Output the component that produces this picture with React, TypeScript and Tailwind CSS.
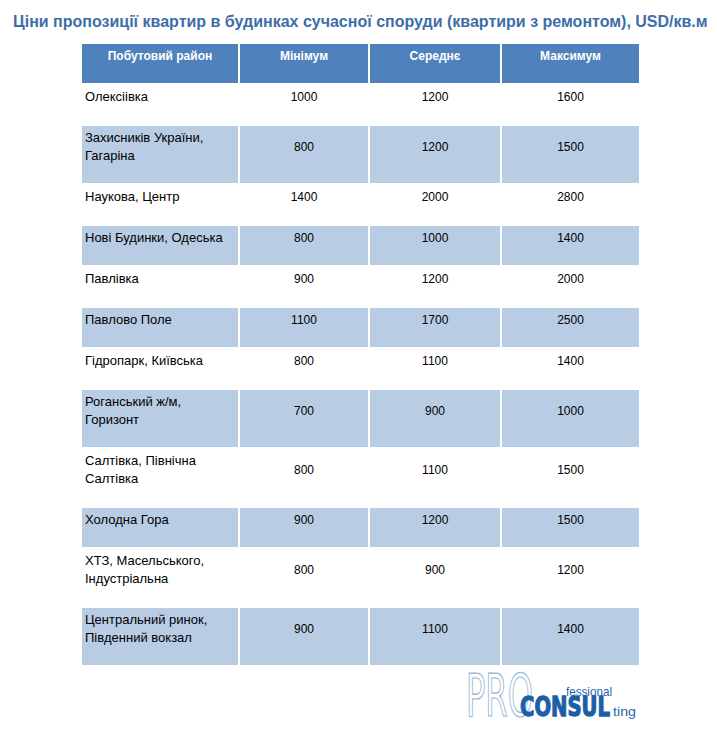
const rows: [string, string, string, string, boolean][] = [
  ['Олексіівка', '1000', '1200', '1600', false],
  ['Захисників України, Гагаріна', '800', '1200', '1500', true],
  ['Наукова, Центр', '1400', '2000', '2800', false],
  ['Нові Будинки, Одеська', '800', '1000', '1400', true],
  ['Павлівка', '900', '1200', '2000', false],
  ['Павлово Поле', '1100', '1700', '2500', true],
  ['Гідропарк, Київська', '800', '1100', '1400', false],
  ['Роганський ж/м, Горизонт', '700', '900', '1000', true],
  ['Салтівка, Північна Салтівка', '800', '1100', '1500', false],
  ['Холодна Гора', '900', '1200', '1500', true],
  ['ХТЗ, Масельського, Індустріальна', '800', '900', '1200', false],
  ['Центральний ринок, Південний вокзал', '900', '1100', '1400', true],
];

function Logo() {
  return (
    <svg width="180" height="56" viewBox="0 0 180 56" className="block overflow-visible">
      <g transform="translate(0,48) scale(1,1.75)">
        <text
          x="3"
          y="0"
          fontFamily="'DejaVu Sans Condensed', 'Liberation Sans', sans-serif"
          fontSize="34"
          fill="none"
          stroke="#8fb4d4"
          strokeWidth="0.7"
          textLength="67"
          lengthAdjust="spacingAndGlyphs"
        >
          PRO
        </text>
      </g>
      <text
        x="103"
        y="28"
        fontFamily="'Liberation Sans', Arial, sans-serif"
        fontSize="13"
        fill="#2a66ad"
        textLength="46"
        lengthAdjust="spacingAndGlyphs"
      >
        fessional
      </text>
      <text
        x="57"
        y="48"
        fontFamily="'DejaVu Sans', 'Liberation Sans', sans-serif"
        fontWeight="900"
        fontSize="27"
        fill="#1d5ea8"
        stroke="#1d5ea8"
        strokeWidth="1.3"
        textLength="90"
        lengthAdjust="spacingAndGlyphs"
      >
        CONSUL
      </text>
      <text
        x="150"
        y="48"
        fontFamily="'Liberation Sans', Arial, sans-serif"
        fontSize="12"
        fill="#2a66ad"
        textLength="23"
        lengthAdjust="spacingAndGlyphs"
      >
        ting
      </text>
    </svg>
  );
}

export default function App() {
  return (
    <div className="w-[717px] h-[742px] bg-white font-['Liberation_Sans',Arial,sans-serif] text-black">
      <h1 className="pl-[13px] pt-[12px] text-[16px] leading-[20px] font-bold text-[#3d6ea8] whitespace-nowrap">
        Ціни пропозиції квартир в будинках сучасної споруди (квартири з ремонтом), USD/кв.м
      </h1>
      <table className="ml-[80px] mt-[10px] border-separate border-spacing-[2px] text-[12px] leading-[18px]">
        <colgroup>
          <col className="w-[156px]" />
          <col className="w-[128px]" />
          <col className="w-[130px]" />
          <col className="w-[137px]" />
        </colgroup>
        <thead>
          <tr className="h-[39px]">
            {['Побутовий район', 'Мінімум', 'Середнє', 'Максимум'].map((h) => (
              <th
                key={h}
                className="bg-[#4f81bd] text-white font-bold text-center align-top pt-[3px] pb-[18px] px-[4px]"
              >
                {h}
              </th>
            ))}
          </tr>
        </thead>
        <tbody>
          {rows.map(([name, min, avg, max, band]) => (
            <tr key={name} className={band ? 'bg-[#b8cce4]' : 'bg-white'}>
              <td className="text-left align-top text-[13px] pt-[3px] pb-[18px] pl-[3px] pr-[6px]">{name}</td>
              <td className="text-center align-middle pt-[3px] pb-[18px]">{min}</td>
              <td className="text-center align-middle pt-[3px] pb-[18px]">{avg}</td>
              <td className="text-center align-middle pt-[3px] pb-[18px]">{max}</td>
            </tr>
          ))}
        </tbody>
      </table>
      <div className="ml-[463px] mt-[1px]">
        <Logo />
      </div>
    </div>
  );
}
